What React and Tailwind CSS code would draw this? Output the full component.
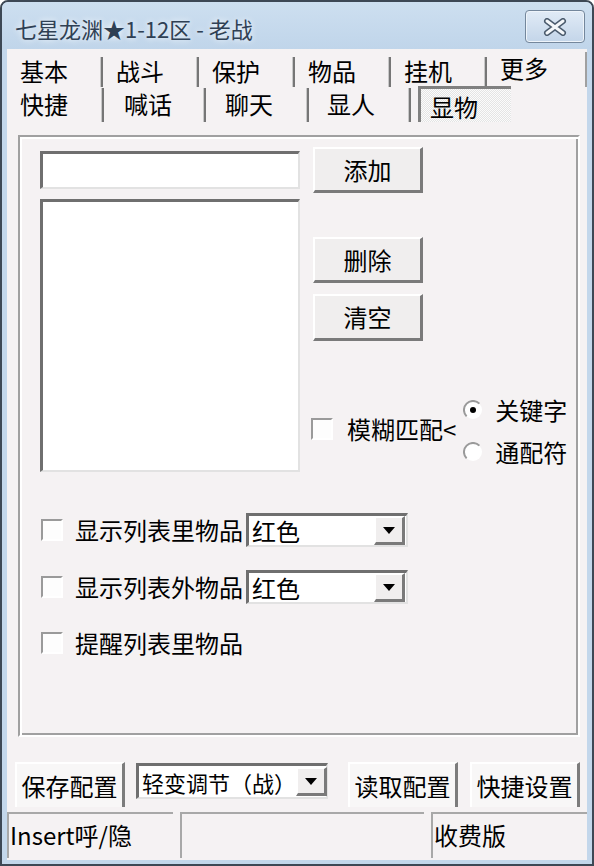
import React from 'react';

const raised =
  'bg-[#f0eeee] border-t-2 border-l-2 border-t-white border-l-white border-r-[3px] border-b-[3px] border-r-[#7a7a7a] border-b-[#7a7a7a]';
const sunken =
  'bg-white border-t-[3px] border-l-[3px] border-t-[#6f6f6f] border-l-[#6f6f6f] border-r-2 border-b-2 border-r-[#e2e2e2] border-b-[#e2e2e2]';

const Sep = ({ h = 'h-[30px]', mt = 'mt-[8px]' }) => (
  <div className={`${mt} ${h} w-[3px] bg-[#767676] border-l border-[#c8c8c8] ml-auto`} />
);

const Check = () => (
  <div className="w-[22px] h-[22px] shrink-0 bg-[#fdfdfd] border-t-2 border-l-2 border-t-[#9a9a9a] border-l-[#9a9a9a] border-r-2 border-b-2 border-r-white border-b-white" />
);

const Radio = ({ checked }) => (
  <svg width="20" height="20" viewBox="0 0 20 20" className="shrink-0">
    <circle cx="10" cy="10" r="9" fill="#fff" />
    <path d="M3.6 16.4 A9 9 0 0 1 16.4 3.6" stroke="#9a9a9a" strokeWidth="2" fill="none" />
    {checked && <circle cx="10" cy="10" r="3" fill="#000" />}
  </svg>
);

const Arrow = () => (
  <div className={`${raised} w-[31px] h-[29px] flex items-center justify-center shrink-0`}>
    <svg width="12" height="7" viewBox="0 0 12 7">
      <polygon points="0,0 12,0 6,7" fill="#000" />
    </svg>
  </div>
);

const Combo = ({ text, w, h = 'h-[34px]', size = 'text-[24px]' }) => (
  <div className={`${sunken} ${w} ${h} flex items-center pl-[3px] pr-[1px]`}>
    <span className={`${size} leading-[28px] flex-1 whitespace-nowrap`}>{text}</span>
    <Arrow />
  </div>
);

const Button = ({ children, className = '' }) => (
  <div className={`${raised} w-[110px] flex items-center justify-center text-[24px] leading-[24px] ${className}`}>
    {children}
  </div>
);

const FlatButton = ({ children, className = '' }) => (
  <div
    className={`w-[110px] h-[45px] bg-[#f8f7f7] border-t-2 border-l-2 border-white border-r-[3px] border-r-[#7c7c7c] flex items-center justify-center text-[24px] leading-[24px] ${className}`}
  >
    {children}
  </div>
);

export default function App() {
  const row1 = ['基本', '战斗', '保护', '物品', '挂机'];
  const row2 = [
    { t: '快捷', w: 'w-[97px]', pl: 'pl-[13px]' },
    { t: '喊话', w: 'w-[102px]', pl: 'pl-[20px]' },
    { t: '聊天', w: 'w-[103px]', pl: 'pl-[19px]' },
    { t: '显人', w: 'w-[102px]', pl: 'pl-[18px]' },
  ];

  return (
    <div className="w-[594px] h-[866px] bg-[#c3d7eb] border-2 border-[#3d4855] rounded-t-[8px] flex flex-col overflow-hidden font-['Noto_Sans_CJK_SC',sans-serif] text-black">
      {/* title bar */}
      <div className="h-[47px] shrink-0 flex items-start justify-between pl-[13px] pr-[7px] bg-linear-to-b from-[#cddff0] to-[#c0d5ea]">
        <span className="mt-[15px] text-[22px] leading-[22px] text-[#2f4054] [text-shadow:0_0_6px_#fff] whitespace-nowrap">
          七星龙渊★1-12区 - 老战
        </span>
        <div className="mt-[8px] w-[60px] h-[33px] rounded-[4px] border border-[#74879c] bg-linear-to-b from-[#e1ebf6] to-[#c3d5e9] shadow-[inset_0_0_0_1px_#eef4fa] flex items-center justify-center">
          <svg width="24" height="18" viewBox="0 0 24 18">
            <path d="M4 3 L20 15 M20 3 L4 15" stroke="#4c5c6e" strokeWidth="6" strokeLinecap="round" fill="none" />
            <path d="M4 3 L20 15 M20 3 L4 15" stroke="#f4f7fa" strokeWidth="3" strokeLinecap="round" fill="none" />
          </svg>
        </div>
      </div>

      {/* client */}
      <div className="flex-1 mx-[5px] mb-[4px] bg-[#f5f2f3] flex flex-col">
        {/* tab row 1 */}
        <div className="h-[38px] flex">
          {row1.map((t) => (
            <div key={t} className="w-[96px] flex">
              <span className="pl-[13px] pt-[10px] text-[24px] leading-[24px]">{t}</span>
              <Sep />
            </div>
          ))}
          <div className="w-[96px] flex">
            <span className="pl-[13px] pt-[7px] text-[24px] leading-[24px]">更多</span>
          </div>
          <div className="ml-auto mt-[3px] h-[35px] w-[2px] bg-[#a0a0a0]" />
        </div>

        {/* tab row 2 */}
        <div className="h-[35px] flex">
          {row2.map((r) => (
            <div key={r.t} className={`${r.w} flex`}>
              <span className={`${r.pl} pt-[5px] text-[24px] leading-[24px]`}>{r.t}</span>
              <Sep h="h-[34px]" mt="mt-[1px]" />
            </div>
          ))}
          <div className="ml-[7px] -mt-[1px] w-[93px] h-[36px] border-t-[3px] border-l-[3px] border-[#808080] bg-[image:repeating-conic-gradient(#e4e4e4_0%_25%,#fbfbfb_0%_50%)] bg-[length:2px_2px]">
            <span className="block pl-[9px] pt-[6px] text-[24px] leading-[24px]">显物</span>
          </div>
        </div>

        {/* panel */}
        <div className="mt-[13px] ml-[11px] mr-[7px] h-[602px] border-2 border-t-[#a0a0a0] border-l-[#a0a0a0] border-r-white border-b-white shadow-[inset_2px_2px_0_#fff,inset_-2px_-2px_0_#a0a0a0] pl-[20px] pt-[10px] flex flex-col">
          <div className="flex items-start">
            <div className="flex flex-col">
              <div className={`${sunken} mt-[4px] w-[260px] h-[38px]`} />
              <div className={`${sunken} mt-[10px] w-[260px] h-[273px]`} />
            </div>
            <div className="ml-[13px] flex flex-col">
              <Button className="h-[46px]">添加</Button>
              <Button className="mt-[44px] h-[46px]">删除</Button>
              <Button className="mt-[11px] h-[47px]">清空</Button>
              <div className="mt-[57px] flex items-start">
                <div className="mt-[19px] -ml-[2px] flex items-center">
                  <Check />
                  <span className="ml-[14px] text-[24px] leading-[24px] whitespace-nowrap">模糊匹配&lt;</span>
                </div>
                <div className="ml-[7px] flex flex-col">
                  <div className="flex items-center h-[24px]">
                    <Radio checked />
                    <span className="ml-[12px] text-[24px] leading-[24px] whitespace-nowrap">关键字</span>
                  </div>
                  <div className="mt-[18px] flex items-center h-[24px]">
                    <Radio />
                    <span className="ml-[12px] text-[24px] leading-[24px] whitespace-nowrap">通配符</span>
                  </div>
                </div>
              </div>
            </div>
          </div>

          <div className="mt-[41px] h-[34px] flex items-center">
            <div className="ml-[1px]"><Check /></div>
            <span className="ml-[12px] text-[24px] leading-[24px] whitespace-nowrap">显示列表里物品</span>
            <div className="ml-[3px]"><Combo text="红色" w="w-[162px]" /></div>
          </div>
          <div className="mt-[23px] h-[34px] flex items-center">
            <div className="ml-[1px]"><Check /></div>
            <span className="ml-[12px] text-[24px] leading-[24px] whitespace-nowrap">显示列表外物品</span>
            <div className="ml-[3px]"><Combo text="红色" w="w-[162px]" /></div>
          </div>
          <div className="mt-[22px] h-[34px] flex items-center">
            <div className="ml-[1px]"><Check /></div>
            <span className="ml-[12px] text-[24px] leading-[24px] whitespace-nowrap">提醒列表里物品</span>
          </div>
        </div>

        {/* bottom buttons */}
        <div className="mt-[25px] flex items-start">
          <FlatButton className="ml-[8px]">保存配置</FlatButton>
          <div className="ml-[11px] mt-[1px]">
            <Combo text="轻变调节（战）" w="w-[192px]" h="h-[36px]" size="text-[22px]" />
          </div>
          <FlatButton className="ml-[20px]">读取配置</FlatButton>
          <FlatButton className="ml-[12px]">快捷设置</FlatButton>
        </div>

        {/* status bar */}
        <div className="mt-[5px] h-[46px] flex">
          <div className="w-[166px] border-t-2 border-l-2 border-[#a8a8a8] pl-[1px] pt-[9px] text-[24px] leading-[24px] whitespace-nowrap">
            Insert呼/隐
          </div>
          <div className="ml-[7px] w-[244px] border-t-2 border-l-2 border-[#a8a8a8]" />
          <div className="ml-[7px] flex-1 border-t-2 border-l-2 border-[#a8a8a8] pl-[1px] pt-[9px] text-[24px] leading-[24px] whitespace-nowrap">
            收费版
          </div>
        </div>
      </div>
    </div>
  );
}
